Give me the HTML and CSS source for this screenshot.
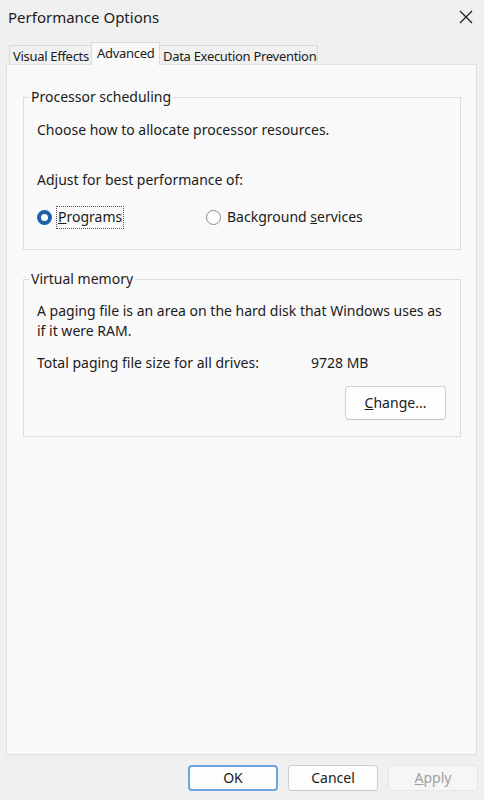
FILE: index.html
```html
<!DOCTYPE html>
<html lang="en">
<head>
 <meta charset="UTF-8">
 <meta name="viewport" content="width=device-width, initial-scale=1.0">
 <title>Performance Options</title>
 <link rel="stylesheet" href="styles.css">
</head>
<body>

 <div class="window">
 <div class="titlebar">
 <span class="title">Performance Options</span>
 <svg class="close" width="14" height="14" viewBox="0 0 14 14">
 <path d="M1 1 L13 13 M13 1 L1 13" stroke="#1b1b1b" stroke-width="1.2" fill="none"/>
 </svg>
 </div>

 <!-- Tabs -->
 <div class="tabs">
 <div class="tab tab-visual">Visual Effects</div>
 <div class="tab tab-adv active">Advanced</div>
 <div class="tab tab-dep">Data Execution Prevention</div>
 </div>

 <div class="panel">
 <fieldset class="group group-cpu">
 <legend>Processor scheduling</legend>
 <p class="line first">Choose how to allocate processor resources.</p>
 <p class="line adjust">Adjust for best performance of:</p>
 <div class="radios">
 <label class="radio radio-programs">
 <span class="dot checked"></span>
 <span class="focus"><u>P</u>rograms</span>
 </label>
 <label class="radio">
 <span class="dot"></span>
 <span class="rlabel">Background <u>s</u>ervices</span>
 </label>
 </div>
 </fieldset>

 <fieldset class="group group-vm">
 <legend>Virtual memory</legend>
 <p class="line first">A paging file is an area on the hard disk that Windows uses as if it were RAM.</p>
 <div class="line total">
 <span class="total-label">Total paging file size for all drives:</span>
 <span>9728 MB</span>
 </div>
 <div class="change-row">
 <button class="btn change"><u>C</u>hange...</button>
 </div>
 </fieldset>
 </div>

 <div class="footer">
 <button class="btn default">OK</button>
 <button class="btn">Cancel</button>
 <button class="btn disabled"><u>A</u>pply</button>
 </div>
 </div>

</body>
</html>
```

FILE: styles.css
```css
/* Base */
body {
margin: 0;
background: #f0f0f0;
font-family: "Noto Sans", "Open Sans", sans-serif;
font-size: 14px;
color: #1b1b1b;
}

.window {
width: 484px;
height: 800px;
display: flex;
flex-direction: column;
}

/* Title bar */
.titlebar {
height: 33px;
display: flex;
align-items: center;
justify-content: space-between;
padding: 0 11px 0 8px;
}

.title {
font-size: 15px;
line-height: 20px;
}

/* Tabs */
.tabs {
display: flex;
align-items: flex-end;
height: 23px;
margin-top: 9px;
padding-left: 9px;
}

.tab {
height: 20px;
line-height: 20px;
box-sizing: border-box;
padding-left: 3px;
font-size: 13px;
letter-spacing: -0.3px;
background: #f0f0f0;
border: 1px solid #dadada;
border-bottom: none;
white-space: nowrap;
overflow: hidden;
}

.tab-visual { width: 83px; }
.tab-adv { width: 69px; margin-left: -1px; }
.tab-dep { width: 159px; margin-left: -1px; }

.tab.active {
height: 23px;
line-height: 21px;
padding-left: 5px;
background: #f9f9f9;
position: relative;
z-index: 1;
}

/* Panel */
.panel {
margin: -1px 7px 0 6px;
height: 691px;
box-sizing: border-box;
background: #f9f9f9;
border: 1px solid #e0e0e0;
padding: 22px 15px 0 16px;
}

.group {
margin: 0;
border: 1px solid #dcdcdc;
padding: 0 0 0 13px;
}

.group legend {
margin-left: -8px;
padding: 0 2px;
line-height: 20px;
}

.line {
margin: 0;
line-height: 20px;
}

.group-cpu .first { margin-top: 13px; }
.group-cpu .adjust { margin-top: 30px; }
.group-cpu { padding-bottom: 21px; }

/* Radios */
.radios {
display: flex;
margin-top: 16px;
height: 22px;
align-items: center;
}

.radio {
display: flex;
align-items: center;
}

.radio-programs { width: 169px; }

.dot {
width: 15px;
height: 15px;
box-sizing: border-box;
border-radius: 50%;
border: 1px solid #8a8a8a;
background: #fdfdfd;
margin-right: 6px;
}

.dot.checked {
border: 4.5px solid #1d5fa8;
background: #fff;
}

.focus {
outline: 1px dotted #555;
padding: 0 1px 1px;
margin-left: -1px;
line-height: 20px;
}

.rlabel { line-height: 20px; }

/* Virtual memory */
.group-vm {
margin-top: 19px;
padding-bottom: 16px;
}

.group-vm .first {
margin-top: 12px;
padding-right: 14px;
}

.total {
display: flex;
margin-top: 12px;
}

.total-label { width: 274px; }

.change-row {
display: flex;
justify-content: flex-end;
margin-top: 13px;
padding-right: 14px;
}

/* Buttons */
.btn {
font-family: inherit;
font-size: 14px;
line-height: 20px;
color: #1b1b1b;
background: #fdfdfd;
border: 1px solid #d0d0d0;
border-bottom-color: #c4c4c4;
border-radius: 4px;
height: 26px;
width: 90px;
padding: 0 0 1px;
}

.btn.change {
width: 101px;
height: 34px;
}

.footer {
display: flex;
justify-content: flex-end;
gap: 10px;
padding: 10px 6px 0 0;
}

.btn.default {
border: 2px solid #6aa5de;
}

.btn.disabled {
color: #a0a0a0;
background: #f6f6f6;
border-color: #e6e6e6;
}
```
